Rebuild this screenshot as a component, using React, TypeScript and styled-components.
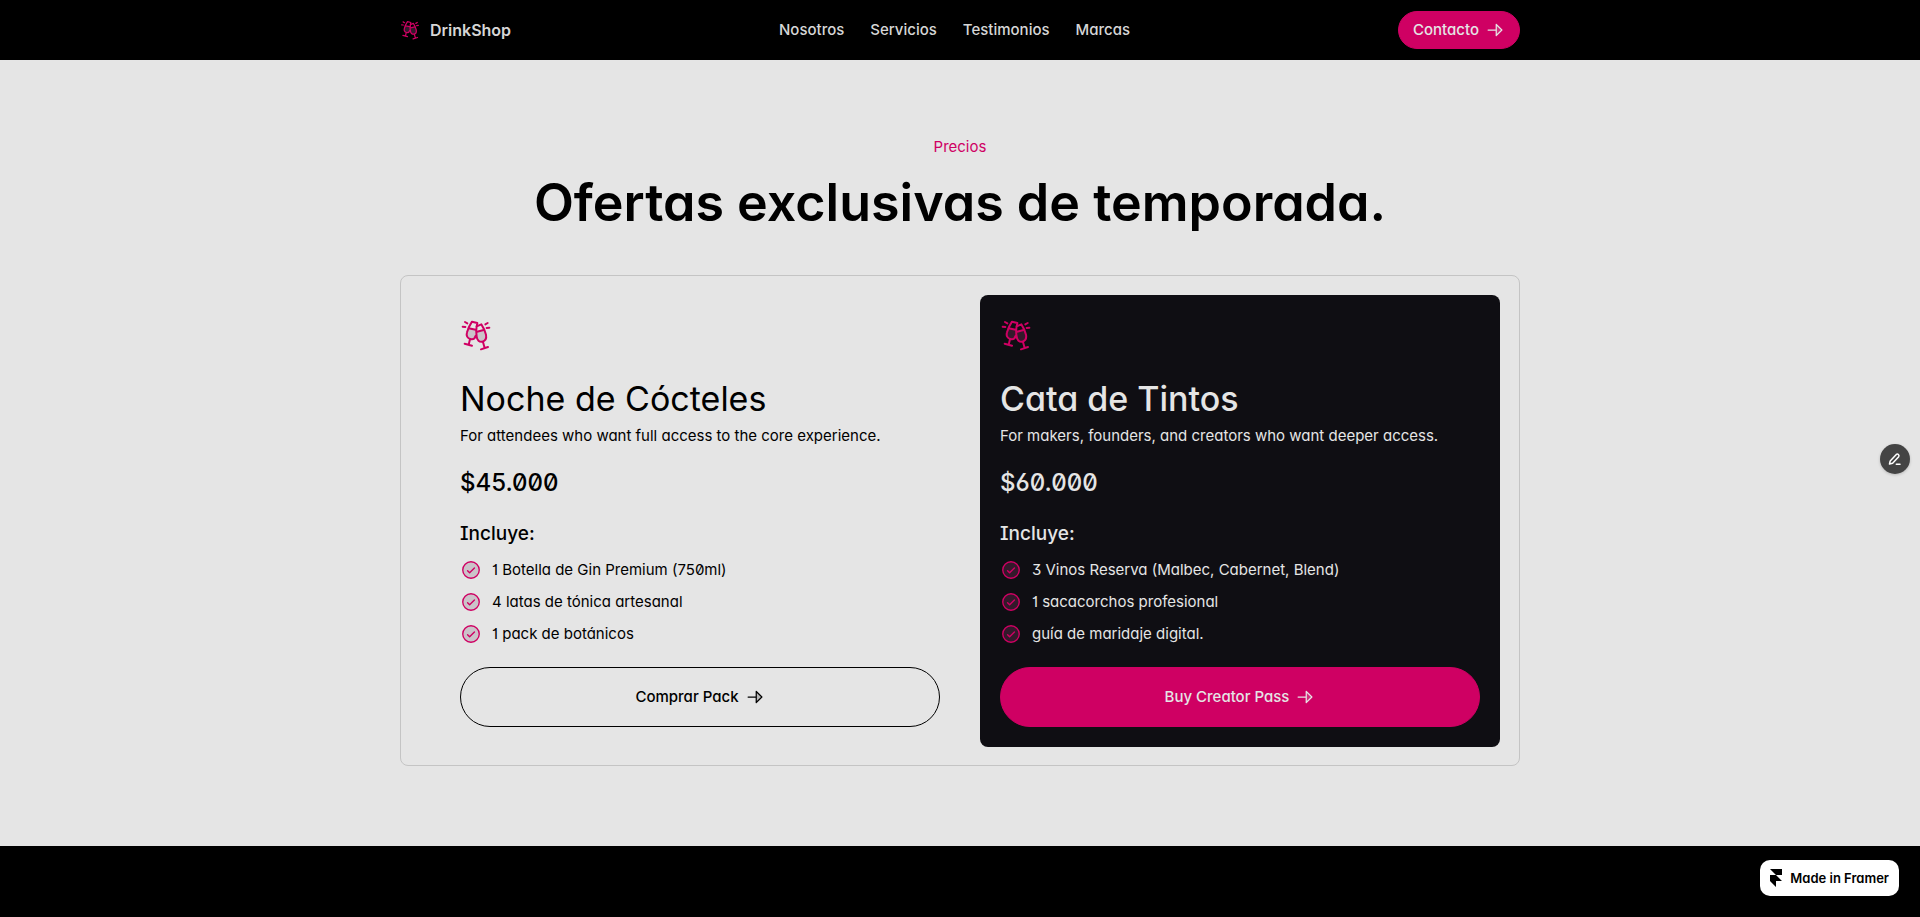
import React from 'react';
import styled, { createGlobalStyle } from 'styled-components';
import { PiCheckCircleDuotone, PiArrowRightDuotone } from 'react-icons/pi';

const pink = '#cf0063';
const light = '#e5e5e5';
const dark = '#0f0e13';
const tintOnLight = '#cbc3c9';
const tintOnDark = '#33192b';

const GlobalStyle = createGlobalStyle`
  *, *::before, *::after { box-sizing: border-box; }
  html, body, #root { margin: 0; min-height: 100vh; }
  body {
    background: #000;
    color: #000;
    font-family: Inter, "Liberation Sans", sans-serif;
    font-size: 15px;
    line-height: 24px;
    font-feature-settings: "cv11", "zero", "cv08", "cv01", "cv09", "cv03", "cv04";
    -webkit-font-smoothing: antialiased;
  }
  h1, h2, h3, p, ul { margin: 0; padding: 0; font-weight: 400; }
  ul { list-style: none; }
  a { color: inherit; text-decoration: none; }
`;

const Page = styled.div`
  min-height: 100vh;
  display: flex;
  flex-direction: column;
`;

const Header = styled.header`
  background: #000;
  color: #d6d6d6;
  padding: 10px 40px;
`;

const Container = styled.div`
  width: 100%;
  max-width: 1120px;
  margin: 0 auto;
`;

const Bar = styled(Container)`
  display: flex;
  justify-content: space-between;
  align-items: center;
  min-height: 40px;
`;

const Brand = styled.a`
  display: flex;
  align-items: center;
  gap: 10px;
  font-size: 16px;
  font-weight: 600;
`;

const Nav = styled.nav`
  display: flex;
  gap: 26px;
`;

const NavLink = styled.a`
  font-weight: 500;
`;

const PillButton = styled.button<{ $variant: 'filled' | 'outline'; $large?: boolean }>`
  display: inline-flex;
  align-items: center;
  justify-content: center;
  gap: 6px;
  height: ${(p) => (p.$large ? 60 : 38)}px;
  width: ${(p) => (p.$large ? '100%' : 'auto')};
  padding: 0 ${(p) => (p.$large ? 16 : 14)}px;
  border-radius: 30px;
  border: 1px solid ${(p) => (p.$variant === 'filled' ? pink : '#000')};
  background: ${(p) => (p.$variant === 'filled' ? pink : 'transparent')};
  color: ${(p) => (p.$variant === 'filled' ? light : '#000')};
  font: inherit;
  font-weight: 500;
  font-feature-settings: inherit;
  cursor: pointer;
`;

const Pricing = styled.section`
  background: ${light};
  padding: 75px 40px 80px;
`;

const Eyebrow = styled.p`
  color: ${pink};
  text-align: center;
`;

const Heading = styled.h2`
  margin: 12px 0 40px;
  font-size: 52px;
  line-height: 64px;
  font-weight: 600;
  text-align: center;
`;

const Plans = styled(Container)`
  display: grid;
  grid-template-columns: 1fr 1fr;
  gap: 20px;
  padding: 19px 19px 18px 39px;
  border: 1px solid #c4c4c4;
  border-radius: 8px;
`;

const Plan = styled.article<{ $dark?: boolean }>`
  display: flex;
  flex-direction: column;
  padding: 20px;
  border-radius: 8px;
  background: ${(p) => (p.$dark ? dark : 'transparent')};
  color: ${(p) => (p.$dark ? light : '#000')};
`;

const PlanIcon = styled.div`
  height: 40px;
  margin-bottom: 22px;
  display: flex;
  align-items: center;
`;

const PlanTitle = styled.h3<{ $dark?: boolean }>`
  font-size: 34px;
  line-height: 44px;
  font-weight: ${(p) => (p.$dark ? 500 : 400)};
  margin-bottom: 3px;
`;

const Description = styled.p`
  margin-bottom: 19px;
`;

const Price = styled.p`
  font-size: 24px;
  line-height: 32px;
  font-weight: 500;
  margin-bottom: 21px;
`;

const Includes = styled.p`
  font-size: 19px;
  line-height: 28px;
  font-weight: 500;
  margin-bottom: 10px;
`;

const Features = styled.ul`
  display: flex;
  flex-direction: column;
  gap: 8px;
  margin-bottom: 21px;
`;

const Feature = styled.li<{ $dark?: boolean }>`
  display: flex;
  align-items: center;
  gap: 10px;

  svg { color: ${pink}; flex: none; }
  svg path[opacity] {
    opacity: 1;
    fill: ${(p) => (p.$dark ? tintOnDark : tintOnLight)};
  }
`;

const Footer = styled.footer`
  flex: 1;
  min-height: 71px;
  background: #000;
`;

const EditButton = styled.button`
  position: fixed;
  right: 10px;
  top: 50%;
  transform: translateY(-50%);
  width: 30px;
  height: 30px;
  padding: 0;
  border: 0;
  border-radius: 50%;
  display: grid;
  place-items: center;
  background: #444;
  color: #fff;
  box-shadow: 0 1px 3px rgba(0, 0, 0, 0.2);
`;

const FramerBadge = styled.a`
  position: fixed;
  right: 21px;
  bottom: 21px;
  height: 36px;
  padding: 0 10px;
  display: flex;
  align-items: center;
  gap: 8px;
  border-radius: 10px;
  background: #fff;
  color: #000;
  font-size: 13px;
  font-weight: 600;
`;

const plans = [
  {
    title: 'Noche de Cócteles',
    description: 'For attendees who want full access to the core experience.',
    price: '$45.000',
    features: ['1 Botella de Gin Premium (750ml)', '4 latas de tónica artesanal', '1 pack de botánicos'],
    action: 'Comprar Pack',
    dark: false,
  },
  {
    title: 'Cata de Tintos',
    description: 'For makers, founders, and creators who want deeper access.',
    price: '$60.000',
    features: ['3 Vinos Reserva (Malbec, Cabernet, Blend)', '1 sacacorchos profesional', 'guía de maridaje digital.'],
    action: 'Buy Creator Pass',
    dark: true,
  },
];

const links = ['Nosotros', 'Servicios', 'Testimonios', 'Marcas'];

/** Two clinking champagne glasses with sparks. */
function CheersIcon({ size, tint }: { size: number; tint: string }) {
  return (
    <svg
      width={size}
      height={size}
      viewBox="30 27 96 96"
      fill="none"
      stroke={pink}
      strokeWidth="6"
      strokeLinecap="round"
      strokeLinejoin="round"
      aria-hidden
    >
      <path d="M55 56L79 60L78 73C77 83 70 89 61 87C52 85 48 77 51 67Z" fill={tint} stroke="none" />
      <path d="M82 66L103 61L108 74C110 85 105 93 97 95C88 97 81 90 80 80Z" fill={tint} stroke="none" />
      <path d="M80 49L82 39L66 35C60 44 54 56 51 67C48 77 52 85 61 87C69 89 75 85 77 77" />
      <path d="M80 49L94 43C101 53 105 63 108 74C110 85 105 93 97 95C88 97 81 90 80 80C78 69 78 59 80 49Z" />
      <path d="M56 55L77 59M81 65L101 60" />
      <path d="M60 88L56 104M44 101L66 107M99 96L104 114M93 118L114 111" />
      <path d="M45 36L52 40M38 50L46 51M106 43L113 39M110 54L118 53" />
    </svg>
  );
}

export default function App() {
  return (
    <Page>
      <GlobalStyle />
      <Header>
        <Bar>
          <Brand href="#">
            <CheersIcon size={20} tint={tintOnDark} />
            DrinkShop
          </Brand>
          <Nav>
            {links.map((l) => (
              <NavLink key={l} href={`#${l.toLowerCase()}`}>{l}</NavLink>
            ))}
          </Nav>
          <PillButton $variant="filled">
            Contacto
            <PiArrowRightDuotone size={20} aria-hidden />
          </PillButton>
        </Bar>
      </Header>
      <Pricing>
        <Eyebrow>Precios</Eyebrow>
        <Heading>Ofertas exclusivas de temporada.</Heading>
        <Plans>
          {plans.map((p) => (
            <Plan key={p.title} $dark={p.dark}>
              <PlanIcon>
                <CheersIcon size={32} tint={p.dark ? tintOnDark : tintOnLight} />
              </PlanIcon>
              <PlanTitle $dark={p.dark}>{p.title}</PlanTitle>
              <Description>{p.description}</Description>
              <Price>{p.price}</Price>
              <Includes>Incluye:</Includes>
              <Features>
                {p.features.map((f) => (
                  <Feature key={f} $dark={p.dark}>
                    <PiCheckCircleDuotone size={22} aria-hidden />
                    {f}
                  </Feature>
                ))}
              </Features>
              <PillButton $large $variant={p.dark ? 'filled' : 'outline'}>
                {p.action}
                <PiArrowRightDuotone size={20} aria-hidden />
              </PillButton>
            </Plan>
          ))}
        </Plans>
      </Pricing>
      <Footer />
      <EditButton aria-label="Edit">
        <svg width="14" height="14" viewBox="0 0 14 14" fill="none" stroke="currentColor" strokeWidth="1.5" strokeLinecap="round" strokeLinejoin="round">
          <path d="M1.500 12l.7-3L8.300 2.400a1.700 1.700 0 0 1 2.400 2.300L4.600 11.200z" />
          <path d="M8.300 12.200H12" />
        </svg>
      </EditButton>
      <FramerBadge href="#framer">
        <svg width="12" height="18" viewBox="0 0 12 18" fill="currentColor" aria-hidden>
          <path d="M0 0h12v6H6zM0 6h6l6 6H0zM0 12h6v6z" />
        </svg>
        Made in Framer
      </FramerBadge>
    </Page>
  );
}
